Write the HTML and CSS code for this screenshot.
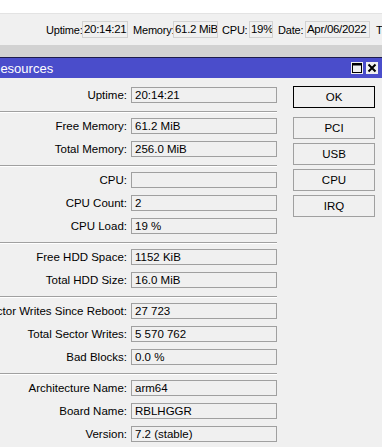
FILE: index.html
```html
<!DOCTYPE html>
<html>
<head>
<meta charset="utf-8">
<link rel="stylesheet" href="styles.css">
</head>
<body>
<div class="topstrip"></div>
<div class="statusbar">
  <span class="slabel l1">Uptime:</span><span class="sfield w46">20:14:21</span>
  <span class="slabel l2">Memory:</span><span class="sfield w45">61.2 MiB</span>
  <span class="slabel l3">CPU:</span><span class="sfield w24">19%</span>
  <span class="slabel l4">Date:</span><span class="sfield w65">Apr/06/2022</span>
  <span class="slabel l5">T</span>
</div>
<div class="band"></div>
<div class="window">
  <div class="titlebar">
    <span class="title">Resources</span>
    <span class="tbtns">
      <span class="tbtn"><svg width="12" height="12" viewBox="0 0 12 12"><rect x="1.5" y="1.5" width="9" height="9" fill="none" stroke="#000" stroke-width="1"/><line x1="1.5" y1="2.5" x2="10.5" y2="2.5" stroke="#000" stroke-width="2"/></svg></span>
      <span class="tbtn"><svg width="12" height="12" viewBox="0 0 12 12"><path d="M2.5 2.5 L9.5 9.5 M9.5 2.5 L2.5 9.5" stroke="#000" stroke-width="2"/></svg></span>
    </span>
  </div>
  <div class="body">
    <div class="form">
      <div class="group">
        <div class="row"><label><span>Uptime:</span></label><span class="field">20:14:21</span></div>
      </div>
      <div class="sep"></div>
      <div class="group">
        <div class="row"><label><span>Free Memory:</span></label><span class="field">61.2 MiB</span></div>
        <div class="row"><label><span>Total Memory:</span></label><span class="field">256.0 MiB</span></div>
      </div>
      <div class="sep"></div>
      <div class="group">
        <div class="row"><label><span>CPU:</span></label><span class="field"></span></div>
        <div class="row"><label><span>CPU Count:</span></label><span class="field">2</span></div>
        <div class="row"><label><span>CPU Load:</span></label><span class="field">19 %</span></div>
      </div>
      <div class="sep"></div>
      <div class="group">
        <div class="row"><label><span>Free HDD Space:</span></label><span class="field">1152 KiB</span></div>
        <div class="row"><label><span>Total HDD Size:</span></label><span class="field">16.0 MiB</span></div>
      </div>
      <div class="sep"></div>
      <div class="group">
        <div class="row"><label><span>Sector Writes Since Reboot:</span></label><span class="field">27 723</span></div>
        <div class="row"><label><span>Total Sector Writes:</span></label><span class="field">5 570 762</span></div>
        <div class="row"><label><span>Bad Blocks:</span></label><span class="field">0.0 %</span></div>
      </div>
      <div class="sep"></div>
      <div class="group">
        <div class="row"><label><span>Architecture Name:</span></label><span class="field">arm64</span></div>
        <div class="row"><label><span>Board Name:</span></label><span class="field">RBLHGGR</span></div>
        <div class="row"><label><span>Version:</span></label><span class="field">7.2 (stable)</span></div>
      </div>
    </div>
    <div class="buttons">
      <button class="btn default">OK</button>
      <div class="btngroup">
        <button class="btn">PCI</button>
        <button class="btn">USB</button>
        <button class="btn">CPU</button>
        <button class="btn">IRQ</button>
      </div>
    </div>
  </div>
</div>
</body>
</html>
```

FILE: styles.css
```css
html, body {
  margin: 0;
  padding: 0;
  width: 382px;
  height: 447px;
  overflow: hidden;
  background: #f0f0f0;
  font-family: "Liberation Sans", Arial, sans-serif;
  font-size: 11px;
  color: #000;
}
.topstrip {
  height: 13px;
  background: #ffffff;
  border-bottom: 1px solid #e3e3e3;
}
.statusbar {
  height: 31px;
  background: #f0f0f0;
  display: flex;
  align-items: center;
  white-space: nowrap;
  padding-left: 46px;
  overflow: hidden;
  font-size: 11px;
  letter-spacing: -0.2px;
}
.slabel {
  flex-shrink: 0;
}
.l1 { width: 36px; }
.l2 { width: 40px; margin-left: 5px; }
.l3 { width: 27px; margin-left: 4px; }
.l4 { width: 27px; margin-left: 5px; }
.l5 { margin-left: 6px; }
.sfield {
  box-sizing: border-box;
  height: 17px;
  line-height: 15px;
  border: 1px solid #d2d2d2;
  padding-left: 1px;
  background: #f0f0f0;
  flex-shrink: 0;
  overflow: hidden;
  font-size: 11.5px;
  letter-spacing: -0.3px;
}
.w46 { width: 46px; }
.w45 { width: 45px; }
.w24 { width: 24px; }
.w65 { width: 65px; }
.band {
  height: 12px;
  background: #d2d2d2;
  border-bottom: 1px solid #1c1c4c;
}
.titlebar {
  height: 20px;
  background: #4a4dcb;
  display: flex;
  align-items: center;
  justify-content: space-between;
  color: #fff;
  overflow: hidden;
}
.title {
  margin-left: -9px;
  font-size: 13px;
}
.tbtns {
  display: flex;
  gap: 3px;
  margin-right: 4px;
}
.tbtn {
  width: 12px;
  height: 12px;
  background: #f0f0f0;
  display: flex;
}
.body {
  display: flex;
  align-items: flex-start;
  padding-top: 9px;
}
.form {
  width: 277px;
  display: flex;
  flex-direction: column;
  flex-shrink: 0;
}
.group {
  display: flex;
  flex-direction: column;
  gap: 7px;
}
.row {
  display: flex;
  align-items: center;
  height: 16px;
}
.row label {
  flex: 1;
  min-width: 0;
  display: flex;
  justify-content: flex-end;
  white-space: nowrap;
  padding-right: 4px;
  font-size: 11.5px;
}
.row label span {
  flex-shrink: 0;
}
.field {
  box-sizing: border-box;
  width: 146px;
  height: 16px;
  line-height: 14px;
  border: 1px solid #a0a0a0;
  padding-left: 3px;
  white-space: nowrap;
  font-size: 11.5px;
  flex-shrink: 0;
}
.sep {
  height: 1px;
  background: #a0a0a0;
  border-bottom: 1px solid #ffffff;
  margin: 8px 0 5px;
}
.buttons {
  margin-left: 16px;
  margin-top: -1px;
  display: flex;
  flex-direction: column;
}
.btngroup {
  margin-top: 9px;
  display: flex;
  flex-direction: column;
  gap: 4px;
}
.btn {
  box-sizing: border-box;
  width: 82px;
  height: 22px;
  background: #f0f0f0;
  border: 1px solid #a0a0a0;
  font-family: "Liberation Sans", Arial, sans-serif;
  font-size: 11.5px;
  color: #000;
  padding: 0;
}
.btn.default {
  border: 1px solid #000;
}
```
